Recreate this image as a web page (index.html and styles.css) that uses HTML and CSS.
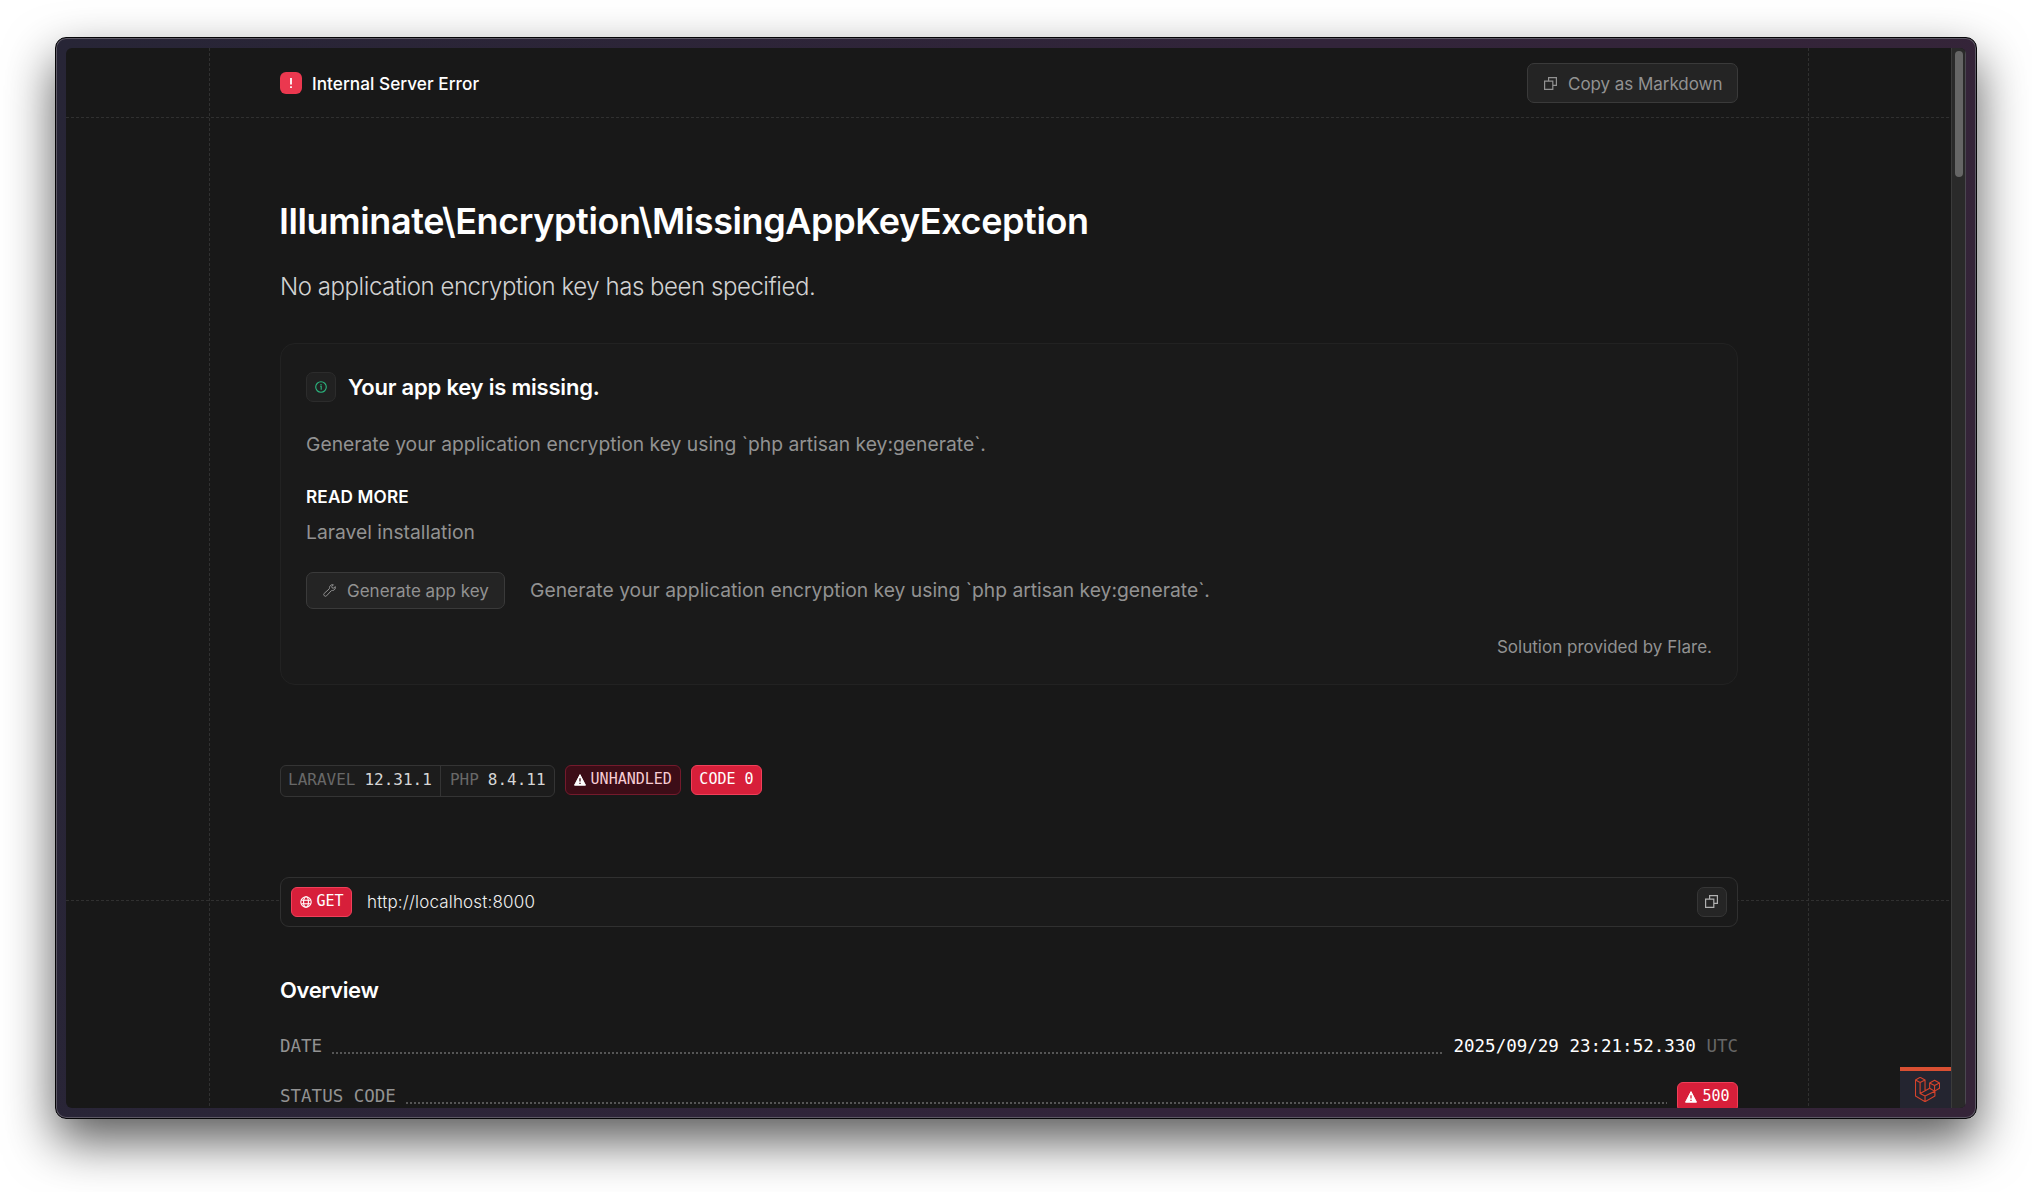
FILE: index.html
```
<!DOCTYPE html>
<html lang="en">
<head>
  <meta charset="UTF-8">
  <meta name="viewport" content="width=device-width, initial-scale=1.0">
  <title>Internal Server Error</title>
  <link rel="stylesheet" href="styles.css">
</head>
<body>

  <svg class="sprite">
    <symbol id="copy" viewBox="0 0 13 13">
      <path d="M4.6 3.8V.6h7.8v7.8H9.2M.6 4.2h8.2v8.2H.6z" fill="none" stroke="currentColor" stroke-width="1.2"/>
    </symbol>
    <symbol id="warning" viewBox="0 0 12 12">
      <path d="M6 .6 11.5 11.2H.5z" fill="currentColor" stroke="currentColor" stroke-linejoin="round"/>
      <path d="M6 4.2v3.4M6 8.7v1.3" stroke="var(--mark)" stroke-width="1.3"/>
    </symbol>
  </svg>

  <div class="window">
    <div class="screen">
      <div class="viewport">

        <header class="topbar">
          <div class="topbar-title">
            <svg class="alert-icon" viewBox="0 0 22 22">
              <rect width="22" height="22" rx="6" fill="#eb384f"/>
              <path d="M11 6v6.6M11 14.2v1.9" stroke="#fff" stroke-width="1.8"/>
            </svg>
            <span>Internal Server Error</span>
          </div>
          <button class="btn copy-markdown">
            <svg><use href="#copy"/></svg>
            <span>Copy as Markdown</span>
          </button>
        </header>

        <main>
          <section class="column">
            <h1>Illuminate\Encryption\MissingAppKeyException</h1>
            <p class="message">No application encryption key has been specified.</p>

            <div class="solution">
              <div class="solution-title">
                <span class="info-box">
                  <svg viewBox="0 0 12 12" fill="none" stroke="#2bb57e" stroke-width="1.1">
                    <circle cx="6" cy="6" r="5.3"/>
                    <path d="M5.3 5.4h.9v3.4M6 3.1v1.1"/>
                  </svg>
                </span>
                <h2>Your app key is missing.</h2>
              </div>
              <p class="solution-text">Generate your application encryption key using `php artisan key:generate`.</p>
              <h3>READ MORE</h3>
              <p class="solution-link">Laravel installation</p>
              <div class="solution-run">
                <button class="btn generate">
                  <svg viewBox="0 0 13 13" fill="none" stroke="currentColor" stroke-linejoin="round">
                    <path d="M10.4.8 8.8 2.4l.3 1.5 1.5.3 1.6-1.6c.6 1.8-.6 3.9-2.7 3.9-.6 0-1.1 0-1.4.4l-4.5 4.9a1.7 1.7 0 0 1-2.4-2.4L6.1 5c.4-.3.4-.9.4-1.4 0-2 2.100-3.400 3.900-2.800z"/>
                  </svg>
                  <span>Generate app key</span>
                </button>
                <p>Generate your application encryption key using `php artisan key:generate`.</p>
              </div>
              <p class="provider">Solution provided by Flare.</p>
            </div>

            <div class="badges">
              <div class="versions">
                <span class="version"><i>LARAVEL</i><b>12.31.1</b></span>
                <span class="version"><i>PHP</i><b>8.4.11</b></span>
              </div>
              <span class="badge unhandled"><svg><use href="#warning"/></svg><span>UNHANDLED</span></span>
              <span class="badge"><span>CODE 0</span></span>
            </div>
          </section>

          <section class="column request">
            <div class="url-bar">
              <span class="badge">
                <svg class="globe" viewBox="0 0 12 12" fill="none" stroke="currentColor" stroke-width="1.1">
                  <circle cx="6" cy="6" r="5.2"/>
                  <ellipse cx="6" cy="6" rx="2.4" ry="5.2"/>
                  <path d="M1.3 4.2h9.4M1.3 7.8h9.4"/>
                </svg>
                <span>GET</span>
              </span>
              <span class="url">http://localhost:8000</span>
              <button class="copy-url"><svg><use href="#copy"/></svg></button>
            </div>
          </section>

          <section class="column overview">
            <h2>Overview</h2>
            <div class="row">
              <span class="label">DATE</span>
              <span class="dots"></span>
              <span class="value">2025/09/29 23:21:52.330 <em>UTC</em></span>
            </div>
            <div class="row">
              <span class="label">STATUS CODE</span>
              <span class="dots"></span>
              <span class="badge"><svg><use href="#warning"/></svg><span>500</span></span>
            </div>
          </section>
        </main>

        <div class="debugbar">
          <svg viewBox="0 0 75 76" fill="none" stroke="#d5432c" stroke-width="3.4" stroke-linejoin="round">
            <path d="M1 9 15 1l15 8-15 8zM1 9v49l29 17 30-17V43M15 17v33l15 8 30-15M30 9v33M15 50l29-16M30 58v17"/>
            <path d="m44 18 15-8 15 8v16l-15 9-15-9zM44 18l15 8 15-8M59 26v17"/>
          </svg>
        </div>
      </div>

      <div class="scrollbar"><div class="thumb"></div></div>
    </div>
  </div>

</body>
</html>
```
FILE: styles.css
```
* {
  box-sizing: border-box;
}

body {
  margin: 0;
  padding: 37px 0 0 55px;
  height: 1192px;
  overflow: hidden;
  background: white;
  color: white;
  font-family: Inter, sans-serif;
}

h1, h2, h3, p {
  margin: 0;
  font-weight: 600;
}

button {
  font-family: inherit;
}

.sprite {
  display: none;
}

/* window frame */
.window {
  width: 1922px;
  height: 1082px;
  padding: 10px;
  border: 1px solid #050507;
  border-radius: 11px;
  background: linear-gradient(100deg, #272536, #32243a 60%, #352438);
  box-shadow: inset 0 0 0 1px #5c5864, 0 22px 50px rgba(0, 0, 0, 0.65);
}

.screen {
  display: flex;
  height: 1060px;
  border-radius: 6px;
  overflow: hidden;
  background: #181818;
}

.viewport {
  position: relative;
  width: 1885px;
  height: 1060px;
  overflow: hidden;
  background-image:
    repeating-linear-gradient(#303030 0 3px, transparent 3px 5px),
    repeating-linear-gradient(#303030 0 3px, transparent 3px 5px);
  background-size: 1px 100%;
  background-position: 143px 0, 1742px 0;
  background-repeat: no-repeat;
}

.scrollbar {
  width: 15px;
  padding: 3px 0 0 3px;
  background: #2a2a2a;
  border-left: 1px solid #3b3b3b;
  border-right: 1px solid #4b4850;
}

.thumb {
  width: 8px;
  height: 126px;
  border-radius: 4px;
  background: #666;
}

/* header */
.topbar {
  display: flex;
  align-items: center;
  justify-content: space-between;
  height: 70px;
  padding: 0 213px 0 214px;
  background: repeating-linear-gradient(90deg, #303030 0 3px, transparent 3px 5px) 0 100% / 100% 1px no-repeat;
}

.topbar-title {
  display: flex;
  align-items: center;
  gap: 10px;
  font-size: 17.2px;
  font-weight: 500;
  letter-spacing: 0.04px;
}

.topbar-title span {
  padding-top: 1px;
}

.alert-icon {
  width: 22px;
  height: 22px;
}

.btn {
  display: flex;
  align-items: center;
  gap: 11px;
  padding: 0 0 0 16px;
  border: 1px solid #3a3a3a;
  border-radius: 7px;
  background: #242424;
  color: #929292;
  font-size: 17px;
}

.btn svg {
  flex: none;
  width: 13px;
  height: 13px;
}

.btn span {
  padding-top: 1px;
  white-space: nowrap;
}

.copy-markdown {
  width: 211px;
  height: 40px;
  letter-spacing: -0.04px;
}

.column {
  padding: 0 213px 0 214px;
}

h1 {
  margin: 81px 0 0 -1px;
  font-size: 36px;
  line-height: 44px;
  letter-spacing: -0.4px;
}

.message {
  margin: 27px 0 39px;
  font-size: 24px;
  font-weight: 300;
  line-height: 34px;
  letter-spacing: -0.45px;
  color: #d2d2d2;
}

/* solution card */
.solution {
  height: 342px;
  padding: 28px 25px 0;
  border: 1px solid #222;
  border-radius: 15px;
  background: #1a1a1a;
}

.solution-title {
  display: flex;
  align-items: center;
  gap: 12px;
  height: 30px;
}

.info-box {
  display: flex;
  align-items: center;
  justify-content: center;
  width: 30px;
  height: 30px;
  padding: 0 1px 1px 0;
  border: 1px solid #2c2c2c;
  border-radius: 7px;
  background: #212121;
}

.info-box svg {
  width: 12px;
  height: 12px;
}

.solution-title h2 {
  font-size: 22px;
  letter-spacing: -0.21px;
}

.solution p {
  color: #929292;
  font-size: 19.3px;
  font-weight: 400;
  line-height: 28px;
}

.solution .solution-text {
  margin-top: 28px;
}

h3 {
  margin: 26px 0 8px;
  font-size: 17.2px;
  line-height: 26px;
  letter-spacing: 0.15px;
}

.solution-run {
  display: flex;
  align-items: center;
  gap: 25px;
  margin-top: 26px;
}

.solution-run p {
  padding-bottom: 2px;
}

.generate {
  width: 199px;
  height: 37px;
}

.solution .provider {
  margin-top: 25px;
  font-size: 17px;
  line-height: 26px;
  letter-spacing: 0.02px;
  text-align: right;
}

/* badges */
.badges {
  display: flex;
  align-items: flex-start;
  gap: 10px;
  margin-top: 80px;
  font-family: "DejaVu Sans Mono", monospace;
}

.versions {
  display: flex;
  height: 32px;
  border: 1px solid #343434;
  border-radius: 6px;
  background: #1c1c1c;
  font-size: 16px;
  line-height: 28px;
}

.version {
  display: flex;
  gap: 9px;
  padding: 0 8px 0 7px;
}

.version + .version {
  padding-left: 9px;
  border-left: 1px solid #343434;
}

.version i {
  font-style: normal;
  color: #686868;
}

.version b {
  font-weight: 400;
  color: #d6d6d6;
}

.badge {
  --mark: #d71f3a;
  display: flex;
  align-items: center;
  gap: 5px;
  height: 30px;
  padding: 0 7.5px;
  border: 1px solid #f0405a;
  border-radius: 6px;
  background: #d71f3a;
  color: white;
  font-family: "DejaVu Sans Mono", monospace;
  font-size: 15px;
  line-height: 26px;
}

.badge svg {
  width: 12px;
  height: 12px;
}

.badge span {
  padding-bottom: 2px;
}

.unhandled {
  --mark: #3c0d17;
  padding: 0 8px;
  border-color: #741a2c;
  background: #3c0d17;
}

.unhandled span {
  color: #f8cdd5;
}

/* request */
.request {
  margin-top: 80px;
  background: repeating-linear-gradient(90deg, #303030 0 3px, transparent 3px 5px) 0 23px / 100% 1px no-repeat;
}

.url-bar {
  display: flex;
  align-items: center;
  height: 50px;
  padding: 0 10px;
  border: 1px solid #303030;
  border-radius: 9px;
  background: #1a1a1a;
}

.url {
  flex: 1;
  margin-left: 15px;
  font-size: 17px;
  font-weight: 300;
  letter-spacing: 0.18px;
  color: #f0f0f0;
}

.copy-url {
  display: flex;
  align-items: center;
  justify-content: center;
  width: 30px;
  height: 30px;
  padding: 0 1px 1px 0;
  border: 1px solid #363636;
  border-radius: 7px;
  background: #252525;
  color: #b0b0b0;
}

.copy-url svg {
  width: 13px;
  height: 13px;
}

/* overview */
.overview {
  margin-top: 47px;
}

.overview h2 {
  margin-bottom: 25px;
  font-size: 22px;
  line-height: 32px;
  letter-spacing: -0.35px;
}

.row {
  display: flex;
  height: 30px;
  margin-bottom: 20px;
  font-family: "DejaVu Sans Mono", monospace;
  font-size: 17.5px;
  line-height: 30px;
}

.label {
  color: #929292;
}

.dots {
  flex: 1;
  height: 2px;
  margin: 21px 10px 0;
  background: repeating-linear-gradient(90deg, #555 0 2px, transparent 2px 4px);
}

.value em {
  font-style: normal;
  color: #666;
}

.row .badge {
  margin-top: 1px;
}

.debugbar {
  position: absolute;
  right: 0;
  bottom: 0;
  display: flex;
  justify-content: center;
  width: 51px;
  height: 41px;
  padding-top: 6px;
  border-top: 4px solid #d94f32;
  background: #242530;
}

.debugbar svg {
  width: 25px;
  height: 25px;
  margin-left: 3px;
}
```
